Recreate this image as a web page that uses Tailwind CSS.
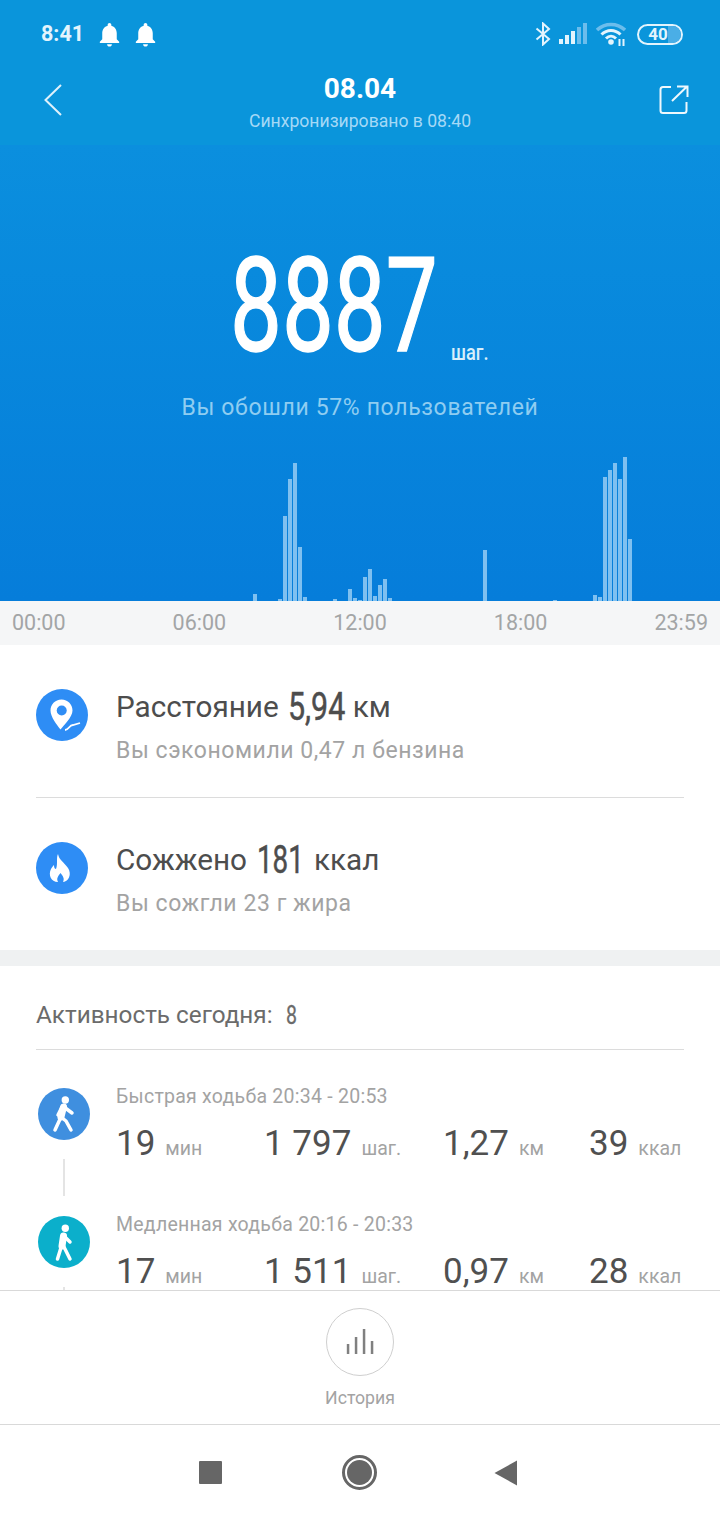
<!DOCTYPE html>
<html lang="ru">
<head>
    <meta charset="UTF-8">
    <meta name="viewport" content="width=device-width, initial-scale=1.0">
    <title>Шаги</title>
    <script src="https://cdn.jsdelivr.net/npm/@tailwindcss/browser@4"></script>
</head>
<body class="bg-white font-['Roboto',sans-serif]">
<div class="w-[720px] h-[1520px] overflow-hidden flex flex-col">

    <!-- Status bar + title -->
    <div class="h-[145px] bg-[#0a95db] text-white shrink-0">
        <div class="h-[68px] flex items-center pl-[41px] pr-[37px]">
            <span class="text-[21.5px] font-bold text-[#e3f4fd]">8:41</span>
            <svg class="w-[29px] h-[29px] ml-[11px]" viewBox="0 0 24 24" fill="#fff"><path d="M12 22c1.100 0 2-.9 2-2h-4c0 1.100.9 2 2 2zm6-6v-5c0-3.070-1.630-5.640-4.500-6.320V4c0-.83-.67-1.500-1.500-1.500s-1.500.67-1.500 1.500v.68C7.640 5.360 6 7.920 6 11v5l-2 2v1h16v-1l-2-2z"/></svg>
            <svg class="w-[29px] h-[29px] ml-[7px]" viewBox="0 0 24 24" fill="#fff"><path d="M12 22c1.100 0 2-.9 2-2h-4c0 1.100.9 2 2 2zm6-6v-5c0-3.070-1.630-5.640-4.500-6.320V4c0-.83-.67-1.500-1.500-1.500s-1.500.67-1.500 1.500v.68C7.640 5.360 6 7.920 6 11v5l-2 2v1h16v-1l-2-2z"/></svg>
            <div class="ml-auto flex items-center">
                <svg class="w-[16px] h-[24px]" viewBox="0 0 16 24" fill="none" stroke="#e3f4fd" stroke-width="2"><path d="M1.500 6.500 L14 17 L8 22.500 V1.500 L14 7 L1.500 17.500"/></svg>
                <svg class="w-[28px] h-[22px] ml-[8px]" viewBox="0 0 28 22">
                    <rect x="0" y="16" width="4" height="5" fill="#e3f4fd"/>
                    <rect x="6" y="12" width="4" height="9" fill="#e3f4fd"/>
                    <rect x="12" y="8" width="4" height="13" fill="#e3f4fd"/>
                    <rect x="18" y="4" width="4" height="17" fill="#6cbdec"/>
                    <rect x="24" y="0" width="4" height="21" fill="#6cbdec"/>
                </svg>
                <svg class="w-[30px] h-[24px] ml-[9px]" viewBox="0 0 30 24" fill="none">
                    <path d="M1 8 C9 0.500 21 0.500 29 8" stroke="#6cbdec" stroke-width="3.500"/>
                    <path d="M5.500 12.500 C11 7 19 7 24.500 12.500" stroke="#e3f4fd" stroke-width="3"/>
                    <path d="M10 16.500 C13 13.500 17 13.500 20 16.500" stroke="#e3f4fd" stroke-width="3"/>
                    <circle cx="15" cy="20" r="2.800" fill="#e3f4fd"/>
                    <path d="M23.500 17 V24 M27.500 17 V24" stroke="#e3f4fd" stroke-width="2"/>
                </svg>
                <div class="w-[46px] h-[21px] ml-[11px] rounded-full border-2 border-[#e3f4fd] overflow-hidden relative flex items-center justify-center">
                    <div class="absolute right-0 top-0 bottom-0 w-[13px] bg-[#4aaee6]"></div>
                    <span class="relative text-[17px] font-bold leading-none text-[#e3f4fd] pr-[4px]">40</span>
                </div>
            </div>
        </div>
        <div class="h-[77px] flex pl-[44px] pr-[31px] relative">
            <svg class="w-[18px] h-[32px] mt-[16px]" viewBox="0 0 18 32" fill="none" stroke="#dff1fb" stroke-width="2"><path d="M17 1 L1.500 16 L17 31"/></svg>
            <div class="absolute inset-x-0 top-0 flex flex-col items-center">
                <span class="text-[28px] font-bold leading-[40px] mt-[1px]">08.04</span>
                <span class="text-[17.6px] leading-[22px] text-[#a5d9f6] mt-[1px]">Синхронизировано в 08:40</span>
            </div>
            <svg class="w-[30px] h-[30px] ml-auto mt-[17px]" viewBox="0 0 30 30" fill="none" stroke="#eef8fd" stroke-width="2">
                <path d="M12 2 H4 Q1.500 2 1.500 4.500 V25.500 Q1.500 28 4 28 H25 Q27.500 28 27.500 25.500 V17"/>
                <path d="M13 16 L27.500 2 M18 1.500 H28.500 V12" />
            </svg>
        </div>
    </div>

    <!-- Steps and chart -->
    <div class="h-[456px] shrink-0 bg-gradient-to-b from-[#0b8fde] to-[#067dda] flex flex-col">
        <div class="h-[227px] flex justify-center items-end pr-[54px]">
            <div class="relative w-[206px] h-[132px]">
                <span class="absolute left-0 top-0 origin-left scale-x-[.7] text-[132px] leading-[132px] [-webkit-text-stroke:1.5px_white] text-white">8887</span>
                <span class="absolute left-[221px] top-[100px] text-[22px] leading-[26px] font-medium text-[#d8effb] scale-x-[.83] origin-left">шаг.</span>
            </div>
        </div>
        <p class="text-center text-[23px] tracking-[.65px] text-[#8fcdf1] mt-[21px] leading-[30px]">Вы обошли 57% пользователей</p>
        <div id="chart" class="mt-auto h-[150px] pl-[3px] flex items-end gap-px"></div>
    </div>
    <div class="h-[44px] shrink-0 bg-[#f5f6f7] flex items-center justify-between px-3 text-[21.5px] text-[#a3a5a6]">
        <span>00:00</span><span>06:00</span><span>12:00</span><span>18:00</span><span>23:59</span>
    </div>

    <!-- Distance and calories -->
    <div class="px-9 shrink-0">
        <div class="h-[153px] flex border-b border-[#dcdcdc]">
            <svg class="w-[52px] h-[52px] mt-[44px] shrink-0" viewBox="0 0 52 52">
                <circle cx="26" cy="26" r="26" fill="#2e8df5"/>
                <path d="M25.500 10.500 C19 10.500 14.500 15.500 14.500 21.500 C14.500 28 21 36 24.500 40.500 C28 36 36.500 28 36.500 21.500 C36.500 15.500 32 10.500 25.500 10.500 Z" fill="#fff"/>
                <circle cx="25.700" cy="21.500" r="5" fill="#2e8df5"/>
                <path d="M29 41 C33 41 33 36 37 36 L44 34" fill="none" stroke="#fff" stroke-width="1.800"/>
            </svg>
            <div class="ml-7">
                <div class="mt-[39px] h-[46px] flex items-center text-[29.7px] text-[#4d4d4d] whitespace-nowrap">
                    <span>Расстояние</span>
                    <span class="w-[57px] ml-[9px] origin-left scale-x-[.8] text-[38px] [-webkit-text-stroke:.5px_#4d4d4d]">5,94</span>
                    <span class="ml-[8px]">км</span>
                </div>
                <p class="text-[23px] tracking-[.55px] leading-[30px] mt-[6px] text-[#a3a3a3]">Вы сэкономили 0,47 л бензина</p>
            </div>
        </div>
        <div class="h-[152px] flex">
            <svg class="w-[52px] h-[52px] mt-[44px] shrink-0" viewBox="0 0 52 52">
                <circle cx="26" cy="26" r="26" fill="#2e8df5"/>
                <path d="M22 12 C23 18 28 20 32 26 C36 32 33 40 26 40 L22 40 C15 40 12 33 15 27 C16 25 17 24 18 23 C18 26 19 27 20 27 C22 22 20 16 22 12 Z" fill="#fff"/>
                <path d="M24.500 31 C22.500 34 20 36 22 40 L27 40 C29 36 26.500 34 24.500 31 Z" fill="#2e8df5"/>
            </svg>
            <div class="ml-7">
                <div class="mt-[39px] h-[46px] flex items-center text-[29.7px] text-[#4d4d4d] whitespace-nowrap">
                    <span>Сожжено</span>
                    <span class="w-[47px] ml-[10px] origin-left scale-x-[.73] text-[38px] [-webkit-text-stroke:.5px_#4d4d4d]">181</span>
                    <span class="ml-[10px]">ккал</span>
                </div>
                <p class="text-[23px] tracking-[.55px] leading-[30px] mt-[6px] text-[#a3a3a3]">Вы сожгли 23 г жира</p>
            </div>
        </div>
    </div>
    <div class="h-[16px] shrink-0 bg-[#eff1f2]"></div>

    <!-- Activity list -->
    <div class="flex-1 min-h-0 px-9">
        <div class="h-[84px] pt-[16px] border-b border-[#dcdcdc] flex items-center text-[24.3px] text-[#6b6b6b]">
            <span>Активность сегодня:</span>
            <span class="ml-[13px] origin-left scale-x-[.75] text-[26px] [-webkit-text-stroke:.3px_#6b6b6b]">8</span>
        </div>
        <div class="h-[128px] flex">
            <div class="w-[56px] shrink-0 flex flex-col items-center pt-[38px]">
                <svg class="w-[52px] h-[52px] shrink-0" viewBox="0 0 52 52">
                    <circle cx="26" cy="26" r="26" fill="#3f8fdf"/>
                    <circle cx="27.300" cy="12" r="3.700" fill="#fff"/>
                    <path d="M25.500 19 L23 29" stroke="#fff" stroke-width="7" stroke-linecap="round"/>
                    <path d="M26 19 L34 25 M24 19 L20 27 M23 29 L17 42 M23 29 L28 33 L33 42" fill="none" stroke="#fff" stroke-width="3.500" stroke-linecap="round" stroke-linejoin="round"/>
                </svg>
                <div class="w-[2px] h-[37px] mt-[19px] shrink-0 bg-[#e4e4e4]"></div>
            </div>
            <div class="flex-1 ml-[24px]">
                <p class="text-[19.5px] leading-[26px] mt-[34px] tracking-[.25px] text-[#a3a3a3]">Быстрая ходьба 20:34 - 20:53</p>
                <div class="grid grid-cols-[148px_179px_146px_1fr] mt-[16px] leading-[35px] text-[19.5px] text-[#a3a3a3] items-baseline">
                    <div><span class="text-[35px] text-[#505050] mr-[10px]">19</span>мин</div>
                    <div><span class="text-[35px] text-[#505050] mr-[10px]">1 797</span>шаг.</div>
                    <div><span class="text-[35px] text-[#505050] mr-[10px]">1,27</span>км</div>
                    <div class="whitespace-nowrap"><span class="text-[35px] text-[#505050] mr-[10px]">39</span>ккал</div>
                </div>
            </div>
        </div>
        <div class="h-[112px] flex">
            <div class="w-[56px] shrink-0 flex flex-col items-center pt-[38px]">
                <svg class="w-[52px] h-[52px] shrink-0" viewBox="0 0 52 52">
                    <circle cx="26" cy="26" r="26" fill="#0bafcb"/>
                    <circle cx="27.300" cy="12.300" r="3.700" fill="#fff"/>
                    <path d="M25.500 20 L24 30" stroke="#fff" stroke-width="7" stroke-linecap="round"/>
                    <path d="M26 20 L32 26 M23.500 30 L19.500 43 M25.500 30 L32 43" fill="none" stroke="#fff" stroke-width="3.500" stroke-linecap="round" stroke-linejoin="round"/>
                </svg>
                <div class="w-[2px] h-[3px] mt-[19px] shrink-0 bg-[#e4e4e4]"></div>
            </div>
            <div class="flex-1 ml-[24px]">
                <p class="text-[19.5px] leading-[26px] mt-[34px] tracking-[.25px] text-[#a3a3a3]">Медленная ходьба 20:16 - 20:33</p>
                <div class="grid grid-cols-[148px_179px_146px_1fr] mt-[16px] leading-[35px] text-[19.5px] text-[#a3a3a3] items-baseline">
                    <div><span class="text-[35px] text-[#505050] mr-[10px]">17</span>мин</div>
                    <div><span class="text-[35px] text-[#505050] mr-[10px]">1 511</span>шаг.</div>
                    <div><span class="text-[35px] text-[#505050] mr-[10px]">0,97</span>км</div>
                    <div class="whitespace-nowrap"><span class="text-[35px] text-[#505050] mr-[10px]">28</span>ккал</div>
                </div>
            </div>
        </div>
    </div>

    <!-- History button -->
    <div class="h-[135px] shrink-0 border-y border-[#d9d9d9] flex flex-col items-center bg-white">
        <div class="w-[68px] h-[68px] mt-[17px] rounded-full border border-[#cfcfcf] flex items-center justify-center">
            <svg class="w-[30px] h-[28px]" viewBox="0 0 30 28" fill="#808080">
                <rect x="1.800" y="16" width="2.500" height="10"/>
                <rect x="9.800" y="9" width="2.500" height="17"/>
                <rect x="17.800" y="1" width="2.500" height="25"/>
                <rect x="25.800" y="13" width="2.500" height="13"/>
            </svg>
        </div>
        <span class="text-[17.7px] leading-[24px] mt-[10px] text-[#a3a3a3]">История</span>
    </div>

    <!-- Navigation bar -->
    <div class="h-[95px] shrink-0 relative">
        <div class="absolute left-[199px] top-[36px] w-[23px] h-[23px] rounded-[1px] bg-[#666]"></div>
        <div class="absolute left-[342px] top-[30px] w-[35px] h-[35px] rounded-full border-[3px] border-[#666] flex items-center justify-center">
            <div class="w-[25px] h-[25px] rounded-full bg-[#666]"></div>
        </div>
        <svg class="absolute left-[494px] top-[35px] w-[24px] h-[26px]" viewBox="0 0 24 26" fill="#666"><path d="M0.500 13 L23 0.500 V25.500 Z"/></svg>
    </div>
</div>

<script>
    // bucket index (10 min each) -> bar height in px
    const bars = {50:7, 55:2, 56:85, 57:122, 58:138, 59:54, 60:4, 66:2, 69:12, 70:3, 71:1, 72:24, 73:32, 74:5, 75:16, 76:22, 77:3, 96:51, 110:1, 118:6, 119:4, 120:124, 121:131, 122:138, 123:122, 124:144, 125:62};
    const chart = document.getElementById("chart");
    for (let i = 0; i < 143; i++) {
        const bar = document.createElement("div");
        bar.className = "w-[4px] shrink-0 bg-[#7fc0f0]";
        bar.style.height = (bars[i] || 0) + "px";
        chart.appendChild(bar);
    }
</script>
</body>
</html>
